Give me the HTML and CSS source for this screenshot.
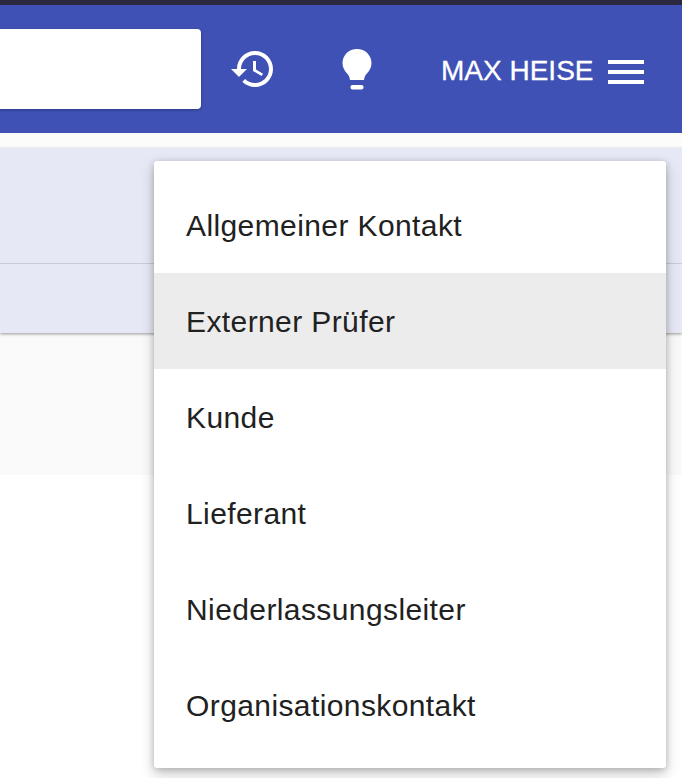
FILE: index.html
```html
<!DOCTYPE html>
<html lang="de">
<head>
<meta charset="utf-8">
<title>Kontakte</title>
<link rel="stylesheet" href="styles.css">
</head>
<body>
<header class="topbar">
  <div class="search"></div>
  <svg class="icon-history" viewBox="0 0 24 24" aria-hidden="true"><path d="M13 3c-4.97 0-9 4.03-9 9H1l3.89 3.89.07.14L9 12H6c0-3.87 3.13-7 7-7s7 3.13 7 7-3.13 7-7 7c-1.93 0-3.68-.79-4.94-2.06l-1.42 1.42C8.27 19.99 10.51 21 13 21c4.97 0 9-4.03 9-9s-4.03-9-9-9zm-1 5v5l4.28 2.54.72-1.21-3.5-2.08V8H12z"/></svg>
  <svg class="icon-bulb" viewBox="0 0 30 42" aria-hidden="true"><path d="M15 0C6.9 0 .5 6.2.5 14c0 4.6 2.2 8 4.6 10.6 1.6 1.8 2.6 3.600 2.900 6.400h14c.3-2.800 1.300-4.600 2.900-6.400 2.400-2.600 4.600-6 4.600-10.600C29.500 6.200 23.100 0 15 0z"/><rect x="8.500" y="36" width="13" height="4.600" rx="2"/></svg>
  <span class="user">MAX HEISE</span>
  <div class="burger"><i></i><i></i><i></i></div>
</header>
<main class="content">
  <section class="band">
    <div class="band-top"></div>
    <div class="band-bottom"></div>
  </section>
  <section class="pale"></section>
</main>
<ul class="menu">
  <li>Allgemeiner Kontakt</li>
  <li class="active">Externer Prüfer</li>
  <li>Kunde</li>
  <li>Lieferant</li>
  <li>Niederlassungsleiter</li>
  <li>Organisationskontakt</li>
</ul>
</body>
</html>
```
FILE: styles.css
```css
* { box-sizing: border-box; }
html, body { margin: 0; height: 100%; overflow: hidden; }
body {
  background: #fff;
  font-family: "Liberation Sans", Arial, sans-serif;
  position: relative;
}
.topbar {
  height: 133px;
  background: #3f51b5;
  border-top: 5px solid #2b2840;
  display: flex;
  align-items: center;
  color: #fff;
}
.search {
  width: 201px;
  height: 80px;
  background: #fff;
  border-radius: 0 4px 4px 0;
  box-shadow: 0 1px 3px rgba(0,0,0,.3);
}
.icon-history { width: 48px; height: 48px; fill: #fff; margin-left: 28px; }
.icon-bulb { width: 30px; height: 42px; fill: #fff; margin-left: 65px; margin-top: 2px; }
.user { font-size: 28px; margin-left: 69px; margin-top: 4px; white-space: nowrap; -webkit-text-stroke: .3px #fff; }
.burger { width: 36px; margin-left: 15px; margin-top: 6px; display: flex; flex-direction: column; gap: 6px; }
.burger i { display: block; height: 4px; background: #fff; }
.content { padding-top: 15px; background: linear-gradient(#fcfcfa 15px, #fff 15px); }
.band {
  position: relative;
  background: #e6e9f5;
  box-shadow: 0 1px 3px rgba(0,0,0,.4);
}
.band-top { height: 116px; border-bottom: 1px solid #c8ccd8; }
.band-bottom { height: 69px; }
.pale { height: 142px; background: #fafafa; }
.menu {
  position: absolute;
  left: 154px;
  top: 161px;
  width: 512px;
  margin: 0;
  padding: 16px 0 15px;
  list-style: none;
  background: #fff;
  border-radius: 3px;
  box-shadow: 0 6px 14px rgba(0,0,0,.22), 0 1px 6px rgba(0,0,0,.18);
}
.menu li {
  height: 96px;
  padding-left: 32px;
  padding-top: 2px;
  display: flex;
  align-items: center;
  font-size: 30px;
  letter-spacing: .4px;
  color: #212121;
}
.menu .active { background: #ececec; }
```
